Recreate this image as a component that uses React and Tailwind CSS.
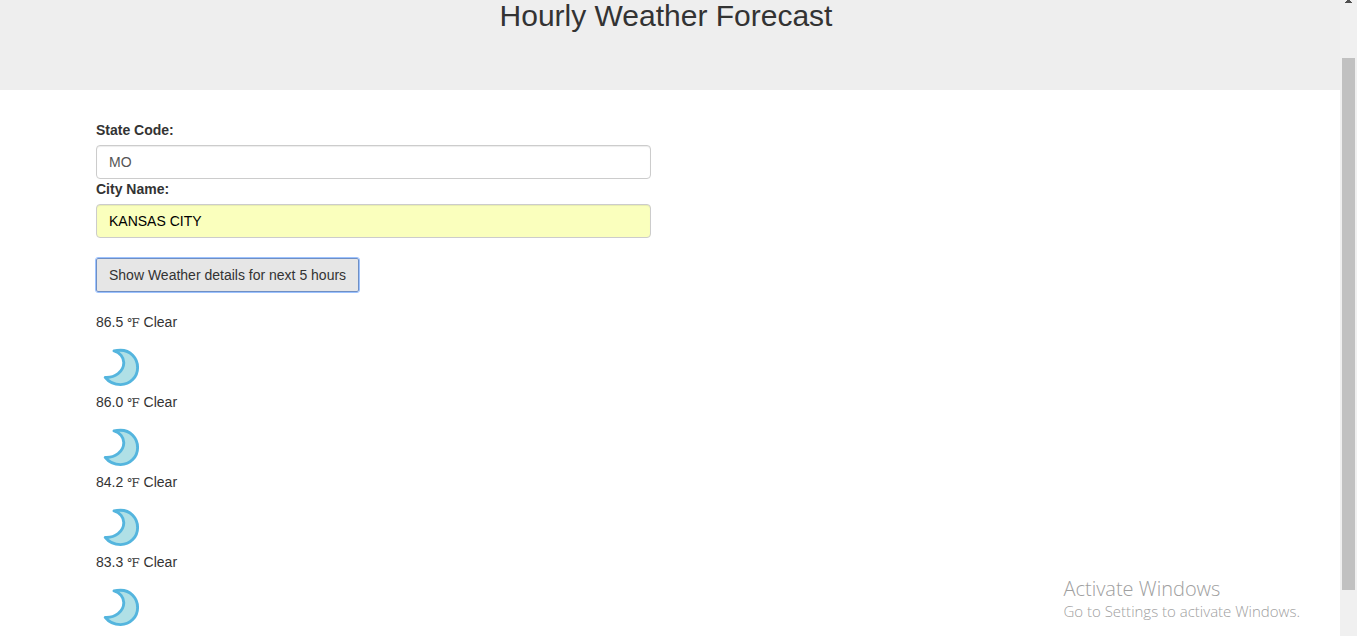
import React from "react";

const hours = ["86.5", "86.0", "84.2", "83.3"];

function Moon() {
  return (
    <svg viewBox="0 0 50 50" className="block size-[50px]" role="img" aria-label="Clear night">
      <path
        d="M18 8.9 C20 8.4 22.4 8.2 24.6 8.2 C34.1 8.2 41.6 15.8 41.6 25.4 C41.6 35 34.1 42.6 24.6 42.6 C18.2 42.6 12.6 39.8 9.2 35.4 C19 36 27.6 29.6 27.8 20.8 C27.9 15.4 23.8 10.4 18 8.9 Z"
        fill="#b0e0e6"
        stroke="#54b5de"
        strokeWidth="2.9"
        strokeLinejoin="round"
      />
    </svg>
  );
}

function Field({ id, label, value, className }) {
  return (
    <div>
      <label htmlFor={id} className="mb-[5px] block font-bold">
        {label}
      </label>
      <input
        id={id}
        type="text"
        defaultValue={value}
        className={`block h-[34px] w-full rounded-sm border border-[#cccccc] px-3 shadow-[inset_0_1px_1px_rgba(0,0,0,0.075)] outline-none ${className}`}
      />
    </div>
  );
}

export default function App() {
  return (
    <div className="flex h-screen overflow-hidden bg-white font-['Liberation_Sans',Arial,sans-serif] text-sm leading-5 text-[#333333]">
      <main className="min-w-0 flex-1 overflow-hidden">
        <header className="h-[90px] bg-[#eeeeee] pr-2 text-center">
          <h1 className="text-[30px] leading-[31px]">Hourly Weather Forecast</h1>
        </header>
        <div className="pr-2">
          <div className="mx-auto max-w-[1170px] px-[15px] pt-[30px]">
            <div className="w-1/2 pr-[15px]">
              <Field id="state" label="State Code:" value="MO" className="bg-white text-[#555555]" />
              <Field id="city" label="City Name:" value="KANSAS CITY" className="bg-[#faffbd] text-black" />
            </div>
            <button
              type="button"
              className="mt-5 block h-[34px] rounded-xs border border-[#6f8fc4] bg-[#e6e6e6] px-3 outline-1 outline-[#9cc2ff]"
            >
              Show Weather details for next 5 hours
            </button>
            <ul className="mt-5">
              {hours.map((temp) => (
                <li key={temp}>
                  <p className="mb-[10px] h-5">
                    {temp} <span className="font-['DejaVu_Serif',serif] text-xs leading-none">℉</span> Clear
                  </p>
                  <Moon />
                </li>
              ))}
            </ul>
          </div>
        </div>
      </main>
      <div className="flex w-[17px] shrink-0 flex-col items-center bg-[#f0f0f0]" aria-hidden="true">
        <svg viewBox="0 0 7 3" className="h-[3px] w-[7px]" shapeRendering="crispEdges">
          <path d="M2 0h3v1h1v1h1v1H0V2h1V1h1z" fill="#505050" />
        </svg>
        <div className="mt-[55px] mb-[46px] w-[13px] flex-1 bg-[#c1c1c1]" />
      </div>
      <aside className="pointer-events-none absolute right-[57px] bottom-[15px] font-['Open_Sans','Segoe_UI',sans-serif] font-light text-[#a0a0a0]">
        <p className="text-[20px] leading-6">Activate Windows</p>
        <p className="text-[15px] leading-5">Go to Settings to activate Windows.</p>
      </aside>
    </div>
  );
}
